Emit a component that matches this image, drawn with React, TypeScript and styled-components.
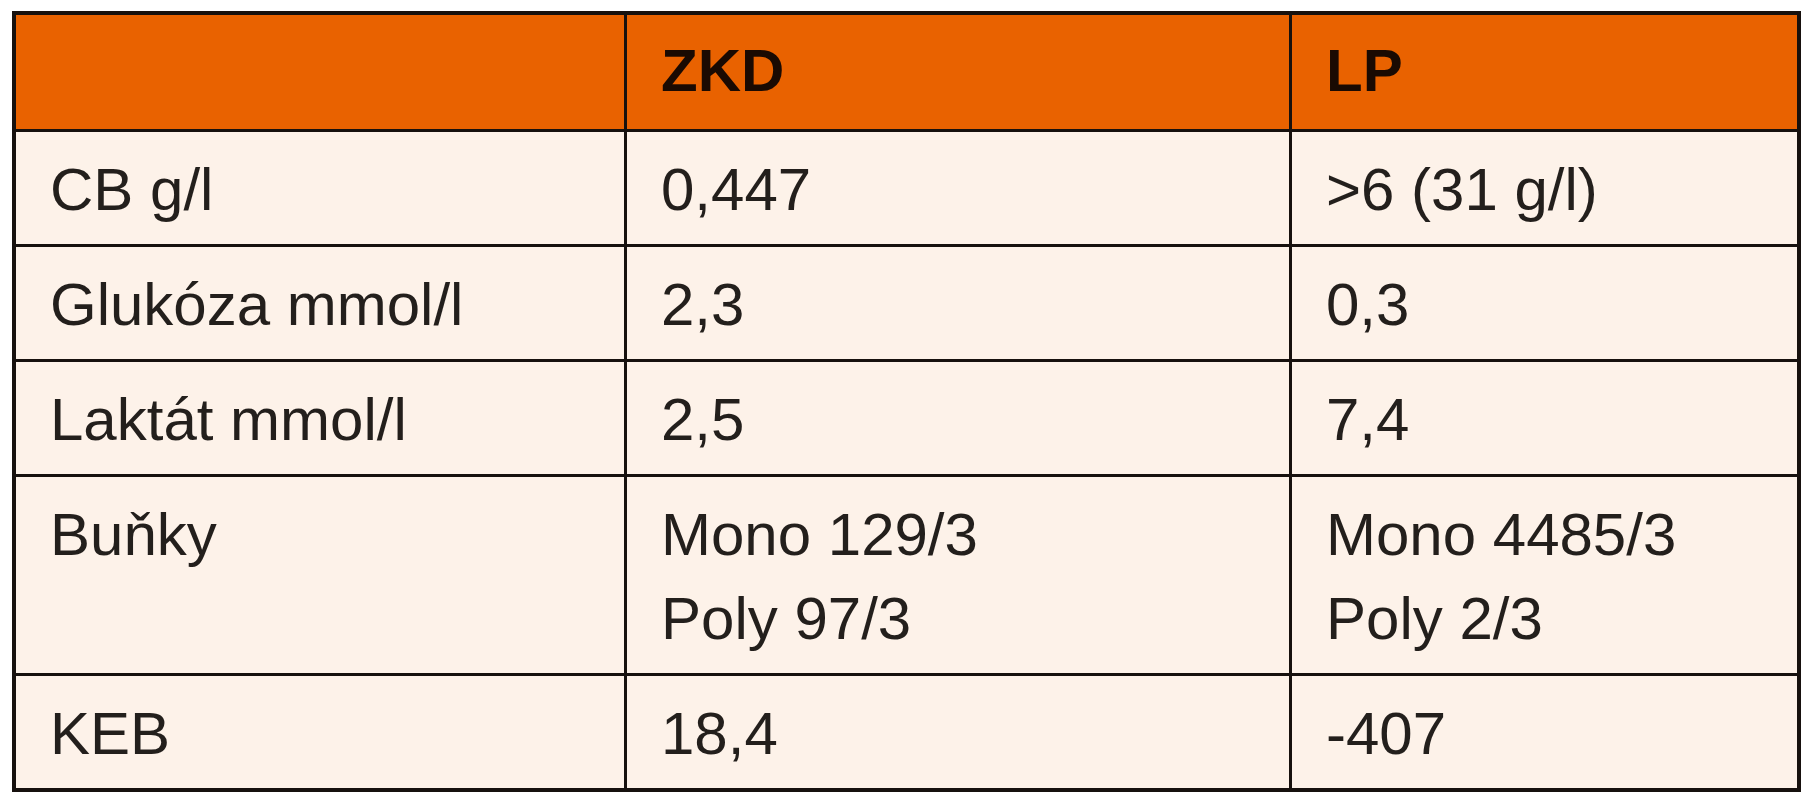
import React from 'react';
import styled, {createGlobalStyle} from "styled-components";

const GlobalStyle = createGlobalStyle`
  html, body {
    margin: 0;
    padding: 0;
    background: #ffffff;
  }
  body {
    font-family: "Liberation Sans", Arial, sans-serif;
  }
`

const Wrap = styled.div`
  padding: 11px 0 0 12px;
`

const Table = styled.table`
  width: 1789px;
  border-collapse: collapse;
  border: 4px solid #17110e;
  background: #fdf2e9;
  color: #231f1c;
  font-size: 60px;
  line-height: 84px;
`

const HeadRow = styled.tr`
  background: #e96200;
  color: #1a0a02;
  font-weight: bold;
`

const HeadCell = styled.th<{ $w?: number }>`
  border: 3px solid #17110e;
  padding: 14px 34px 16px;
  text-align: left;
  vertical-align: top;
  width: ${p => (p.$w ? p.$w + 'px' : 'auto')};
`

const Cell = styled.td`
  border: 3px solid #17110e;
  padding: 16px 34px 12px;
  vertical-align: top;
  white-space: nowrap;
`

const Line = styled.div`
  display: block;
`

type Row = { label: string; zkd: string[]; lp: string[] };

const rows: Row[] = [
    {label: 'CB g/l', zkd: ['0,447'], lp: ['>6 (31 g/l)']},
    {label: 'Glukóza mmol/l', zkd: ['2,3'], lp: ['0,3']},
    {label: 'Laktát mmol/l', zkd: ['2,5'], lp: ['7,4']},
    {label: 'Buňky', zkd: ['Mono 129/3', 'Poly 97/3'], lp: ['Mono 4485/3', 'Poly 2/3']},
    {label: 'KEB', zkd: ['18,4'], lp: ['-407']},
]

const App = () => {
    return (
        <Wrap>
            <GlobalStyle/>
            <Table>
                <thead>
                <HeadRow>
                    <HeadCell $w={540}></HeadCell>
                    <HeadCell $w={594}>ZKD</HeadCell>
                    <HeadCell>LP</HeadCell>
                </HeadRow>
                </thead>
                <tbody>
                {rows.map(r => (
                    <tr key={r.label}>
                        <Cell>{r.label}</Cell>
                        <Cell>{r.zkd.map(t => <Line key={t}>{t}</Line>)}</Cell>
                        <Cell>{r.lp.map(t => <Line key={t}>{t}</Line>)}</Cell>
                    </tr>
                ))}
                </tbody>
            </Table>
        </Wrap>
    );
};

export default App;
